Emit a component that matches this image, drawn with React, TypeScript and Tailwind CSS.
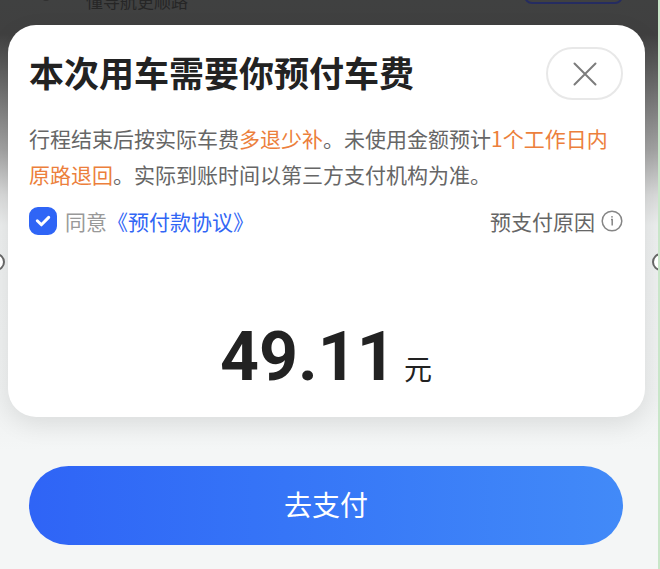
import React, { useState } from "react";

function CloseButton() {
  return (
    <button
      type="button"
      aria-label="关闭"
      className="flex h-[53px] w-[77px] shrink-0 items-center justify-center rounded-full border-2 border-[#e8e8e8] bg-white"
    >
      <svg width="24" height="24" viewBox="0 0 24 24" fill="none" stroke="#7c7c7c" strokeWidth="2" strokeLinecap="round">
        <path d="M1.5 1.5L22.5 22.5M22.5 1.5L1.5 22.5" />
      </svg>
    </button>
  );
}

function InfoIcon() {
  return (
    <svg width="22" height="22" viewBox="0 0 22 22" fill="none" stroke="#858585" strokeWidth="1.5">
      <circle cx="11" cy="11" r="9.8" />
      <path d="M10 9.5H11.2V15.5" />
      <circle cx="11" cy="6.8" r="0.9" fill="#858585" stroke="none" />
    </svg>
  );
}

function Agreement() {
  const [agreed, setAgreed] = useState(true);

  return (
    <div className="flex items-center">
      <span className="relative flex h-7 w-7">
        <input
          id="agree"
          type="checkbox"
          checked={agreed}
          onChange={(e) => setAgreed(e.target.checked)}
          className="peer h-7 w-7 appearance-none rounded-[9px] border-2 border-[#c4c4c4] bg-white checked:border-[#2f65f6] checked:bg-[#2f65f6]"
        />
        <svg
          className="pointer-events-none absolute inset-0 hidden peer-checked:block"
          width="28"
          height="28"
          viewBox="0 0 28 28"
          fill="none"
          stroke="#fff"
          strokeWidth="3"
          strokeLinecap="round"
          strokeLinejoin="round"
        >
          <path d="M8.3 13.8L12.4 17.8L19.7 10.4" />
        </svg>
      </span>
      <label htmlFor="agree" className="pl-2 text-[#999]">
        同意
      </label>
      <a href="#agreement" className="text-[#3166f5]">
        《预付款协议》
      </a>
    </div>
  );
}

export default function App() {
  return (
    <div
      lang="zh-CN"
      className="relative min-h-screen overflow-hidden border-r-2 border-[#c9e6c9] bg-[#f4f6f6] bg-[linear-gradient(#404141_0px,#404040_34px,#6b6b6b_85px,#a3a3a3_150px,#d9dada_195px,#eceeee_225px,#eff1f1_400px,#f4f6f6_450px)] font-['Noto_Sans_CJK_SC',sans-serif]"
    >
      {/* page behind the sheet */}
      <div className="flex h-[25px] items-end justify-between overflow-hidden pr-[35px] pl-[42px]">
        <div className="flex items-end gap-9 pb-3 text-[17px] leading-6 text-[#262626]">
          <span className="mb-3 h-2 w-2 rounded-full bg-[#303030]" />
          <span>懂导航更顺路</span>
        </div>
        <div className="mb-[21px] h-9 w-[99px] rounded-lg border-2 border-[#252c61]" />
      </div>

      <main className="pr-[13px] pl-2">
        <section className="rounded-[28px] bg-white pt-[22px] pr-[22px] pb-[21px] pl-[21px] shadow-[0_8px_24px_rgba(0,0,0,0.09)]">
          <div className="flex items-start justify-between">
            <h1 className="text-[35px] leading-[50px] font-bold text-[#222]">本次用车需要你预付车费</h1>
            <CloseButton />
          </div>

          <p className="mt-5 text-[21px] leading-9 text-[#666]">
            行程结束后按实际车费<span className="text-[#ec7f3c]">多退少补</span>。未使用金额预计
            <span className="text-[#ec7f3c]">1个工作日内原路退回</span>。实际到账时间以第三方支付机构为准。
          </p>

          <div className="mt-[15px] flex items-center justify-between text-[21px] leading-7">
            <Agreement />
            <button type="button" className="flex items-center gap-1.5 text-[#666]">
              预支付原因
              <InfoIcon />
            </button>
          </div>

          <div className="mt-[83px] flex items-baseline justify-center gap-2 text-[#222]">
            <span className="font-[Roboto,sans-serif] text-[68px] leading-[78px] font-bold">49.11</span>
            <span className="text-[28px] leading-9">元</span>
          </div>
        </section>

        <div className="pt-[49px] pr-[22px] pb-6 pl-[21px]">
          <button
            type="button"
            className="h-[79px] w-full rounded-full bg-linear-to-r from-[#2f64f6] to-[#428af8] pb-1 text-[28px] text-white"
          >
            去支付
          </button>
        </div>
      </main>

      {/* selection handles on both edges */}
      <span className="absolute top-[253px] -left-[13px] h-[18px] w-[18px] rounded-full border-2 border-[#666] bg-white" />
      <span className="absolute top-[253px] -right-[12px] h-[18px] w-[18px] rounded-full border-2 border-[#666] bg-white" />
    </div>
  );
}
